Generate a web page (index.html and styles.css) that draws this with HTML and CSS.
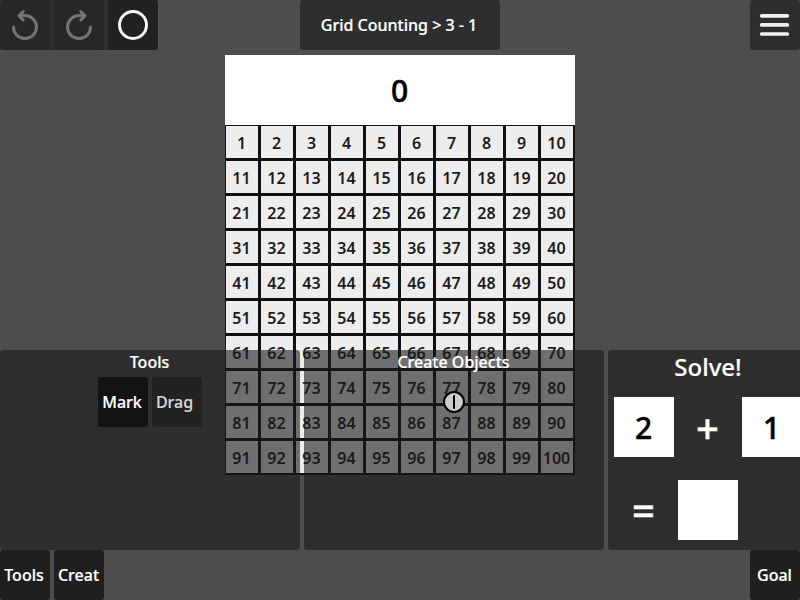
FILE: index.html
```
<!DOCTYPE html>
<html lang="en">
<head>
<meta charset="utf-8">
<title>Grid Counting</title>
<link rel="stylesheet" href="styles.css">
</head>
<body>
<div class="stage">
  <main class="board">
    <div class="count">0</div>
    <div class="cells" id="cells"></div>
  </main>
  <div class="hud">
    <header class="topbar">
      <div class="history">
        <button class="btn undo"><svg width="50" height="50" viewBox="0 0 50 50"><path d="M13.500 27.100A11.500 11.500 0 1 0 25 15.600H19.500M23.200 11.500L19 15.700L23.200 20"/></svg></button>
        <button class="btn redo"><svg width="50" height="50" viewBox="0 0 50 50"><path d="M36.500 27.100A11.500 11.500 0 1 1 25 15.600H30.500M26.800 11.500L31 15.700L26.800 20"/></svg></button>
        <button class="btn reset"><svg width="50" height="50" viewBox="0 0 50 50"><circle cx="25" cy="25" r="13.500"/></svg></button>
      </div>
      <div class="title">Grid Counting &gt; 3 - 1</div>
      <button class="menu"><svg width="50" height="50" viewBox="0 0 50 50"><path d="M11.700 15.800H37.300M11.700 24.900H37.300M11.700 34H37.300"/></svg></button>
    </header>
    <div class="panels">
      <section class="panel tools">
        <h2>Tools</h2>
        <div class="toolrow">
          <button class="btn active">Mark</button>
          <button class="btn idle">Drag</button>
        </div>
      </section>
      <section class="panel create">
        <h2>Create Objects</h2>
        <svg class="counter" width="24" height="24" viewBox="0 0 24 24"><circle cx="12" cy="12" r="10"/><path d="M12 6V18"/></svg>
      </section>
      <section class="panel goal">
        <h2>Solve!</h2>
        <div class="equation">
          <span class="box">2</span><span class="op">+</span><span class="box">1</span>
          <span class="op">=</span><span class="box"></span>
        </div>
      </section>
    </div>
    <footer class="bottombar">
      <button class="btn tab">Tools</button>
      <button class="btn tab mid">Creat</button>
      <button class="btn tab last">Goal</button>
    </footer>
  </div>
</div>
<script src="cells.js"></script>
</body>
</html>
```
FILE: styles.css
```
* { box-sizing: border-box; }
body {
  margin: 0;
  background: #4d4d4d;
  color: #fff;
  font: 500 16px/22px "Noto Sans", "Open Sans", sans-serif;
  -webkit-text-stroke: .2px;
  overflow: hidden;
}
.stage { display: grid; width: 800px; height: 600px; overflow: hidden; }
.board, .hud { grid-area: 1 / 1; min-width: 0; }
.board { width: 350px; margin: 55px auto 0; }
.count {
  height: 70px;
  background: #fff;
  color: #000;
  font-size: 30px;
  line-height: 72px;
  text-align: center;
  padding-right: 1px;
  -webkit-text-stroke: .5px;
}
.cells { display: grid; grid-template-columns: repeat(10, 35px); grid-auto-rows: 35px; }
.cell {
  display: flex;
  align-items: center;
  justify-content: center;
  background: #ededed;
  border: solid #111;
  border-width: 1px 2px 2px 1px;
  color: #1c1c1c;
  font-weight: 600;
  padding: 1px 1px 0 0;
  -webkit-text-stroke: 0;
}
.hud { display: flex; flex-direction: column; z-index: 1; }
.topbar { display: grid; grid-template-columns: 300px 200px 1fr; height: 50px; }
.history { display: flex; gap: 4px; width: 158px; background: #2e2e2e; border-radius: 3px; }
button {
  font: inherit;
  color: #fff;
  border: 0;
  padding: 0;
  background: none;
}
.btn { width: 50px; height: 50px; border-radius: 3px; background: #1f1f1f; overflow: hidden; }
svg { display: block; fill: none; stroke-linecap: round; stroke-linejoin: round; }
.undo, .redo { background: #272727; }
.undo svg, .redo svg { stroke: #747474; stroke-width: 3; }
.reset { background: #212121; }
.reset svg { stroke: #f5f5f5; stroke-width: 3; }
.title {
  background: #2e2e2e;
  border-radius: 3px;
  text-align: center;
  line-height: 50px;
  padding-right: 2px;
}
.menu { width: 50px; background: #2e2e2e; border-radius: 3px; justify-self: end; }
.menu svg { stroke: #f0f0f0; stroke-width: 3.7; }
.panels { display: flex; gap: 4px; margin-top: 300px; height: 200px; }
.panel { flex: none; width: 300px; background: rgba(26, 26, 26, .6); border-radius: 3px; }
.panel h2 { margin: 0; font: inherit; text-align: center; padding: 1px 1px 0 0; }
.toolrow { display: flex; justify-content: center; gap: 4px; margin-top: 4px; }
.active { background: #131313; padding-right: 2px; }
.idle { background: #222; color: #d6d6d6; padding-right: 5px; }
.counter { margin: 17px auto 0; stroke: #000; stroke-width: 2; }
.counter circle { fill: #ccc; }
.panel.goal { width: 200px; }
.panel.goal h2 { font-size: 24px; line-height: 33px; padding: 0; }
.equation {
  display: grid;
  grid-template-columns: repeat(3, 60px);
  gap: 23px 4px;
  padding: 14px 6px 0;
  font-size: 30px;
  line-height: 62px;
  text-align: center;
  -webkit-text-stroke: .5px;
}
.box { height: 60px; background: #fff; color: #000; padding-right: 1px; }
.op { height: 60px; font-size: 40px; line-height: 62px; padding-right: 1px; }
.bottombar { display: flex; gap: 4px; height: 50px; }
.tab { padding-right: 2px; }
.tab.mid, .tab.last { padding-right: 1px; }
.tab.last { margin-left: auto; }
```
FILE: cells.js
```
const cells = document.getElementById("cells");
for (let n = 1; n <= 100; n++) {
  const cell = document.createElement("span");
  cell.className = "cell";
  cell.textContent = n;
  cells.append(cell);
}
```
